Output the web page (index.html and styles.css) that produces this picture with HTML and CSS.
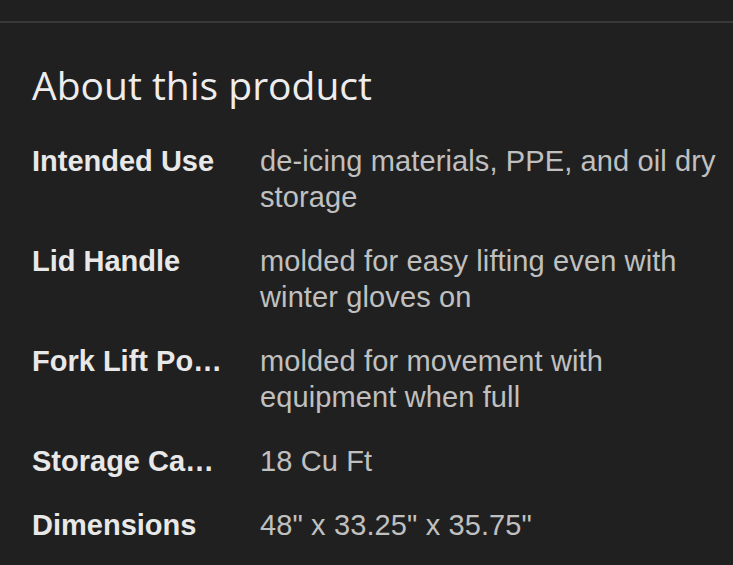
FILE: index.html
```html
<!DOCTYPE html>
<html>
<head>
<meta charset="utf-8">
<link rel="stylesheet" href="styles.css">
</head>
<body>
<div class="topbar"></div>
<section class="about">
  <h2 class="title">About this product</h2>
  <dl class="specs">
    <dt class="label">Intended Use</dt>
    <dd class="value">de-icing materials, PPE, and oil dry storage</dd>
    <dt class="label">Lid Handle</dt>
    <dd class="value">molded for easy lifting even with winter gloves on</dd>
    <dt class="label">Fork Lift Pockets</dt>
    <dd class="value">molded for movement with equipment when full</dd>
    <dt class="label">Storage Capacity</dt>
    <dd class="value">18 Cu Ft</dd>
    <dt class="label">Dimensions</dt>
    <dd class="value">48" x 33.25" x 35.75"</dd>
  </dl>
</section>
</body>
</html>
```
FILE: styles.css
```css
html, body {
  margin: 0;
  padding: 0;
  background: #202020;
}
body {
  font-family: "Liberation Sans", Arial, sans-serif;
  color: #e8e8e8;
}
.topbar {
  height: 21px;
  border-bottom: 2px solid #383838;
}
.about {
  padding: 39px 8px 0 32px;
}
.title {
  margin: 0;
  font-family: "Open Sans", "Liberation Sans", sans-serif;
  font-weight: 400;
  font-size: 39px;
  line-height: 46px;
  color: #ededed;
}
.specs {
  margin: 35px 0 0 0;
  display: grid;
  grid-template-columns: 192px 1fr;
  column-gap: 36px;
  row-gap: 28px;
}
.label {
  margin: 0;
  font-weight: 700;
  font-size: 29px;
  line-height: 36px;
  color: #e8e8e8;
  white-space: nowrap;
  overflow: hidden;
  text-overflow: ellipsis;
}
.value {
  margin: 0;
  font-size: 29px;
  line-height: 36px;
  letter-spacing: 0.12px;
  color: #c0c0c0;
}
```
